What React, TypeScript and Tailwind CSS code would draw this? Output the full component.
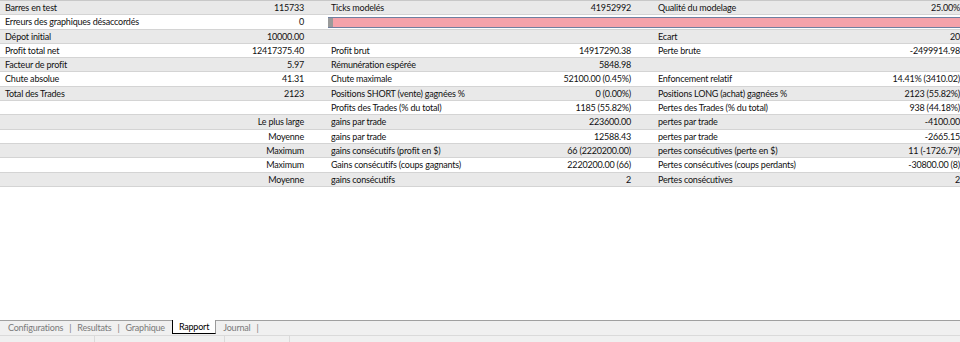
import React from 'react';

type Row = string[];

const rows: Row[] = [
  ['Barres en test', '115733', 'Ticks modelés', '41952992', 'Qualité du modelage', '25.00%'],
  ['Erreurs des graphiques désaccordés', '0', 'BAR'],
  ['Dépot initial', '10000.00', '', '', 'Ecart', '20'],
  ['Profit total net', '12417375.40', 'Profit brut', '14917290.38', 'Perte brute', '-2499914.98'],
  ['Facteur de profit', '5.97', 'Rémunération espérée', '5848.98', '', ''],
  ['Chute absolue', '41.31', 'Chute maximale', '52100.00 (0.45%)', 'Enfoncement relatif', '14.41% (3410.02)'],
  ['Total des Trades', '2123', 'Positions SHORT (vente) gagnées %', '0 (0.00%)', 'Positions LONG (achat) gagnées %', '2123 (55.82%)'],
  ['', '', 'Profits des Trades (% du total)', '1185 (55.82%)', 'Pertes des Trades (% du total)', '938 (44.18%)'],
  ['', 'Le plus large', 'gains par trade', '223600.00', 'pertes par trade', '-4100.00'],
  ['', 'Moyenne', 'gains par trade', '12588.43', 'pertes par trade', '-2665.15'],
  ['', 'Maximum', 'gains consécutifs (profit en $)', '66 (2220200.00)', 'pertes consécutives (perte en $)', '11 (-1726.79)'],
  ['', 'Maximum', 'Gains consécutifs (coups gagnants)', '2220200.00 (66)', 'Pertes consécutives (coups perdants)', '-30800.00 (8)'],
  ['', 'Moyenne', 'gains consécutifs', '2', 'Pertes consécutives', '2'],
];

const tabs = ['Configurations', 'Resultats', 'Graphique', 'Rapport', 'Journal'];

const App: React.FC = () => {
  return (
    <div
      className="w-[960px] h-[342px] bg-white text-[9px] tracking-[-0.2px] text-[#111] flex flex-col overflow-hidden"
      style={{ fontFamily: 'Lato, "Open Sans", sans-serif' }}
    >
      <div className="flex-1 border-t border-[#c8c8c8]">
        {rows.map((r, i) => (
          <div
            key={i}
            className={`h-[14.3px] leading-[13px] flex border-b border-[#d4d4d4] ${
              i % 2 === 0 ? 'bg-[#e9e9e9]' : 'bg-white'
            }`}
          >
            <div className="w-[250px] pl-[5px] truncate">{r[0]}</div>
            <div className="w-[54px] text-right whitespace-nowrap flex justify-end">{r[1]}</div>
            {r[2] === 'BAR' ? (
              <div className="flex-1 pl-[24px] pt-[2px]">
                <div className="h-[11px] border-y border-[#6f7fa0] bg-[#f5a2aa] flex">
                  <div className="w-[5px] bg-[#9a9a9a]" />
                </div>
              </div>
            ) : (
              <>
                <div className="w-[226px] pl-[27px] whitespace-nowrap">{r[2]}</div>
                <div className="w-[101px] text-right whitespace-nowrap">{r[3]}</div>
                <div className="w-[200px] pl-[27px] whitespace-nowrap">{r[4]}</div>
                <div className="w-[129px] text-right whitespace-nowrap">{r[5]}</div>
              </>
            )}
          </div>
        ))}
      </div>
      <div className="h-[22px] bg-[#f0f0f0] border-t border-[#a0a0a0]">
        <div className="flex items-start h-[14px] pl-[8px] text-[#7a7a7a]">
          {tabs.map((t) =>
            t === 'Rapport' ? (
              <div
                key={t}
                className="h-[14px] -mt-[1px] px-[6px] bg-white text-black border-l border-b border-black border-r border-r-[#9a9a9a] leading-[13px] mr-[7px]"
              >
                {t}
              </div>
            ) : (
              <div key={t} className="flex leading-[13px]">
                <span>{t}</span>
                {t !== 'Graphique' && <span className="px-[6px]">|</span>}
                {t === 'Graphique' && <span className="w-[7px]" />}
              </div>
            )
          )}
        </div>
        <div className="flex h-[7px] border-t border-[#dadada]">
          <div className="w-[95px] border-r border-[#dadada]" />
          <div className="w-[130px] border-r border-[#dadada]" />
          <div className="w-[65px] border-r border-[#dadada]" />
        </div>
      </div>
    </div>
  );
};

export default App;
